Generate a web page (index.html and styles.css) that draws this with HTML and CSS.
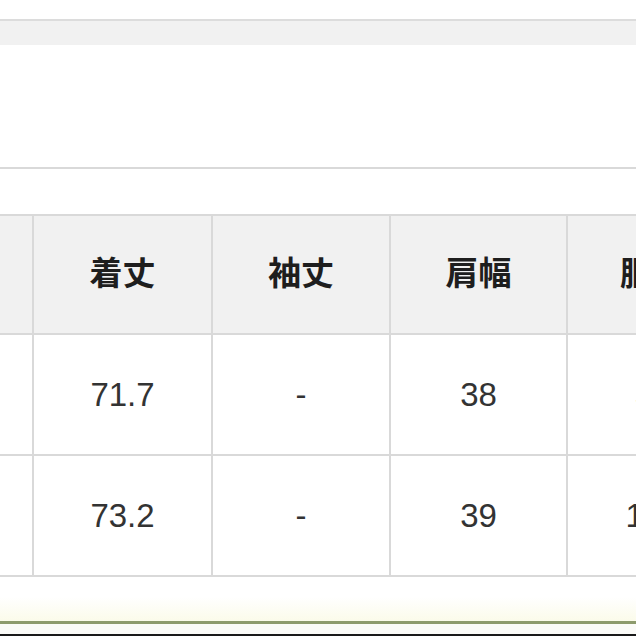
FILE: index.html
```html
<!DOCTYPE html>
<html lang="ja">
<head>
<meta charset="utf-8">
<link rel="stylesheet" href="styles.css">
</head>
<body>
<div class="page">
  <div class="top-space"></div>
  <div class="band"></div>
  <div class="panel"></div>
  <div class="gap"></div>
  <div class="table-wrap">
    <table class="size-table">
      <colgroup>
        <col class="c0"><col class="c1"><col class="c2"><col class="c3"><col class="c4">
      </colgroup>
      <thead>
        <tr>
          <th></th>
          <th>着丈</th>
          <th>袖丈</th>
          <th>肩幅</th>
          <th>胴囲</th>
        </tr>
      </thead>
      <tbody>
        <tr>
          <td></td>
          <td>71.7</td>
          <td>-</td>
          <td>38</td>
          <td>54</td>
        </tr>
        <tr>
          <td></td>
          <td>73.2</td>
          <td>-</td>
          <td>39</td>
          <td>104</td>
        </tr>
      </tbody>
    </table>
  </div>
  <div class="after"></div>
  <div class="rule-olive"></div>
  <div class="strip"></div>
  <div class="rule-dark"></div>
</div>
</body>
</html>
```

FILE: styles.css
```css
html, body {
  margin: 0;
  padding: 0;
  background: #ffffff;
}
.page {
  width: 636px;
  height: 636px;
  overflow: hidden;
  display: flex;
  flex-direction: column;
}
.top-space {
  height: 19px;
  background: #ffffff;
  border-bottom: 2px solid #dcdcdc;
  flex: none;
}
.band {
  height: 24px;
  background: #f1f1f1;
  flex: none;
}
.panel {
  height: 122px;
  background: #ffffff;
  border-bottom: 2px solid #d9d9d9;
  flex: none;
}
.gap {
  height: 45px;
  background: #ffffff;
  flex: none;
}
.table-wrap {
  flex: none;
  overflow: hidden;
  width: 636px;
}
.size-table {
  border-collapse: collapse;
  table-layout: fixed;
  width: 739px;
  font-family: "Liberation Sans", Arial, sans-serif;
}
.c0 { width: 33px; }
.c1 { width: 179px; }
.c2 { width: 178px; }
.c3 { width: 177px; }
.c4 { width: 172px; }
.size-table th,
.size-table td {
  border: 2px solid #d9d9d9;
  text-align: center;
  vertical-align: middle;
  padding: 0;
}
.size-table tr > :first-child {
  border-left: none;
}
.size-table th {
  height: 109px;
  padding-bottom: 8px;
  background: #f1f1f1;
  font-family: "Noto Sans CJK JP", "Noto Sans", sans-serif;
  font-weight: 700;
  font-size: 33px;
  color: #1e1e1e;
}
.size-table td {
  height: 119px;
  background: #ffffff;
  font-size: 33px;
  color: #333333;
}
.after {
  height: 44px;
  flex: none;
  background: linear-gradient(#ffffff 0%, #ffffff 45%, #fbfbea 100%);
}
.rule-olive {
  height: 3px;
  flex: none;
  background: #8d9b6d;
}
.strip {
  flex: 1;
  background: #fbfbf8;
}
.rule-dark {
  height: 2px;
  flex: none;
  background: #1a1a1a;
}
```
